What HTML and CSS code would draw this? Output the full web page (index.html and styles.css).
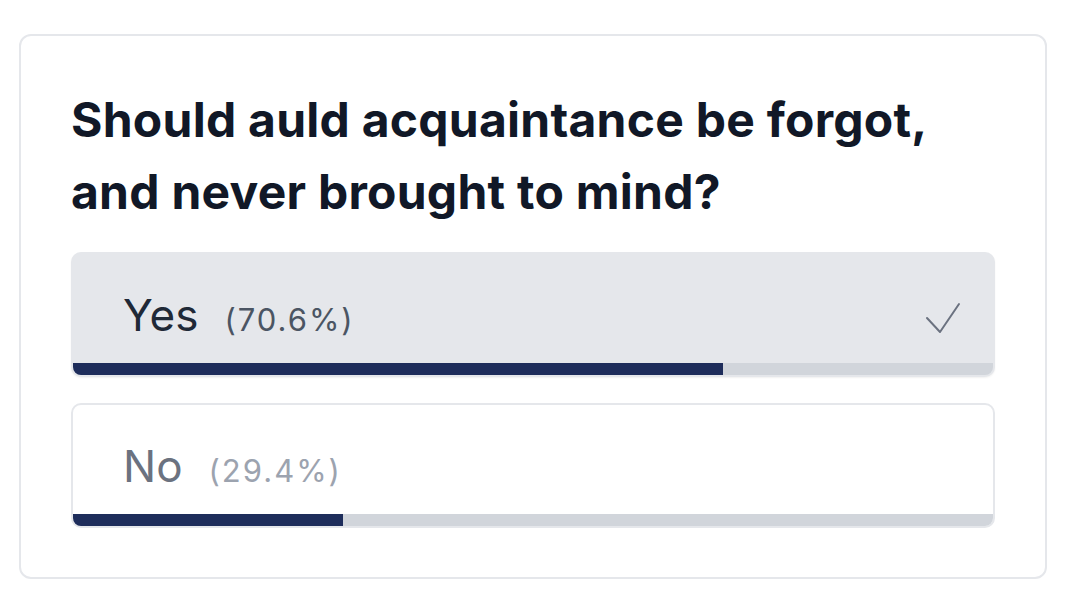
FILE: index.html
```html
<!DOCTYPE html>
<html lang="en">
<head>
<meta charset="UTF-8">
<meta name="viewport" content="width=device-width, initial-scale=1.0">
<title>Poll</title>
<link rel="stylesheet" href="styles.css">
</head>
<body>

<div class="poll-card">
    <h2 class="poll-question">Should auld acquaintance be forgot, and never brought to mind?</h2>

    <div class="poll-options">
        <div class="poll-option selected">
            <div class="option-row">
                <span class="option-label">Yes</span>
                <span class="option-percent">(70.6%)</span>
                <svg class="option-check" width="36" height="32" viewBox="0 0 36 32" fill="none" stroke="#6b7280" stroke-width="2" stroke-linecap="round" stroke-linejoin="round">
                    <polyline points="2,16 15,30 34,2"/>
                </svg>
            </div>
            <div class="option-bar"><div class="option-fill" style="width: 70.6%"></div></div>
        </div>

        <div class="poll-option">
            <div class="option-row">
                <span class="option-label">No</span>
                <span class="option-percent">(29.4%)</span>
            </div>
            <div class="option-bar"><div class="option-fill" style="width: 29.4%"></div></div>
        </div>
    </div>
</div>

</body>
</html>
```

FILE: styles.css
```css
body {
    font-family: Inter, "Noto Sans", sans-serif;
    background-color: #fff;
    margin: 0;
    padding: 34px 34px 0 19px;
    color: #111827;
}
.poll-card {
    background-color: #fff;
    border: 2px solid #e5e7eb;
    border-radius: 12px;
    padding: 48px 50px 49px 50px;
}
.poll-question {
    font-size: 48px;
    line-height: 72px;
    font-weight: 700;
    margin: 0 0 24px 0;
    color: #111827;
    letter-spacing: 0.25px;
}
.poll-options {
    display: flex;
    flex-direction: column;
    gap: 26px;
}
.poll-option {
    border: 2px solid #e5e7eb;
    border-radius: 10px;
    background-color: #fff;
    overflow: hidden;
}
.poll-option.selected {
    background-color: #e5e7eb;
    box-shadow: 0 1px 2px rgba(0,0,0,0.06);
}
.option-row {
    display: flex;
    align-items: baseline;
    padding: 34px 32px 20px 50px;
    height: 55px;
}
.option-label {
    font-size: 44px;
    color: #6b7280;
    margin-right: 26px;
}
.option-percent {
    font-size: 31px;
    letter-spacing: 2px;
    color: #9ca3af;
}
.selected .option-label {
    color: #1f2937;
}
.selected .option-percent {
    color: #4b5563;
}
.option-check {
    margin-left: auto;
    align-self: center;
    position: relative;
    top: 2px;
}
.option-bar {
    height: 12px;
    background-color: #d1d5db;
}
.option-fill {
    height: 100%;
    background-color: #1e2d5b;
}
```
